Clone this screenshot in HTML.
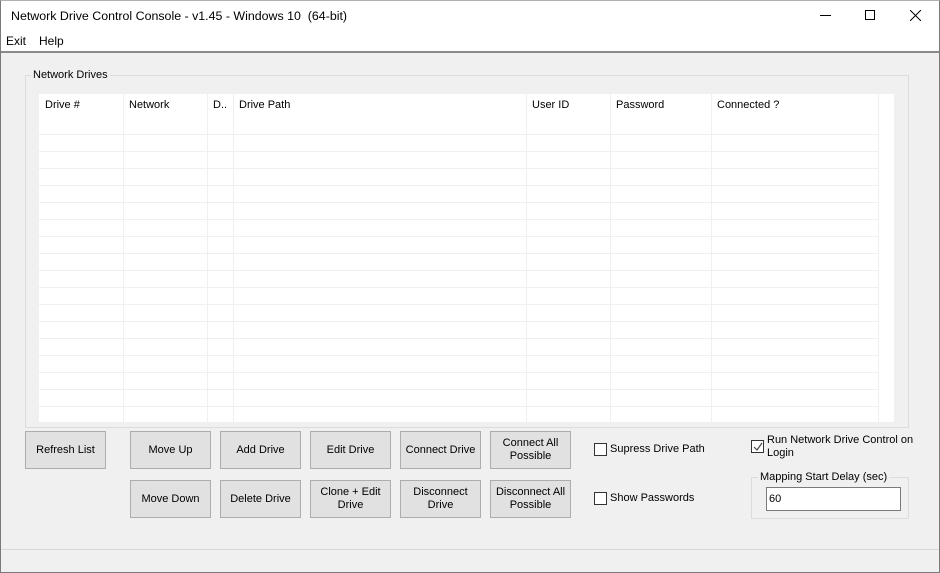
<!DOCTYPE html>
<html><head><meta charset="utf-8"><style>
*{box-sizing:border-box;margin:0;padding:0}
body{width:940px;height:573px;overflow:hidden;background:#f0f0f0;font-family:"Liberation Sans",sans-serif;font-size:11px;color:#000;position:relative}
.a{position:absolute}
.win{position:absolute;left:0;top:0;width:940px;height:573px;border:1px solid #7a7a7a;border-top:1px solid #b0b0b0}
.btn{position:absolute;width:81px;height:38px;background:#e1e1e1;border:1px solid #adadad;display:flex;align-items:center;justify-content:center;text-align:center;line-height:13px;font-size:11px}
.vl{position:absolute;top:94px;width:1px;height:328px;background:#f0f0f0}
.hl{position:absolute;left:39px;width:839px;height:1px;background:#f0f0f0}
.cb{position:absolute;width:13px;height:13px;border:1px solid #333;background:#fff}
</style></head><body>
<div class="a" style="left:0;top:0;width:940px;height:51px;background:#fff"></div>
<div class="a" style="left:11px;top:9px;font-size:12.4px">Network Drive Control Console - v1.45 - Windows 10&nbsp; (64-bit)</div>
<div class="a" style="left:820px;top:15px;width:11px;height:1px;background:#000"></div>
<div class="a" style="left:865px;top:10px;width:10px;height:10px;border:1px solid #000"></div>
<svg class="a" style="left:910px;top:10px" width="11" height="11"><path d="M0 0L11 11M11 0L0 11" stroke="#000" stroke-width="1"/></svg>
<div class="a" style="left:6px;top:34px;font-size:12px">Exit</div>
<div class="a" style="left:39px;top:34px;font-size:12px">Help</div>
<div class="a" style="left:0;top:51px;width:940px;height:2px;background:#8a8a8a"></div>

<div class="a" style="left:25px;top:75px;width:884px;height:353px;border:1px solid #dcdcdc"></div>
<div class="a" style="left:31px;top:69px;background:#f0f0f0;padding:0 2px">Network Drives</div>
<div class="a" style="left:39px;top:94px;width:855px;height:328px;background:#fff"></div>
<div class="a" style="left:878px;top:94px;width:16px;height:328px;background:#fff;border-left:1px solid #f0f0f0"></div>
<div class="vl" style="left:123px"></div><div class="vl" style="left:207px"></div><div class="vl" style="left:233px"></div><div class="vl" style="left:526px"></div><div class="vl" style="left:610px"></div><div class="vl" style="left:711px"></div>
<div class="hl" style="top:134px"></div><div class="hl" style="top:151px"></div><div class="hl" style="top:168px"></div><div class="hl" style="top:185px"></div><div class="hl" style="top:202px"></div><div class="hl" style="top:219px"></div><div class="hl" style="top:236px"></div><div class="hl" style="top:253px"></div><div class="hl" style="top:270px"></div><div class="hl" style="top:287px"></div><div class="hl" style="top:304px"></div><div class="hl" style="top:321px"></div><div class="hl" style="top:338px"></div><div class="hl" style="top:355px"></div><div class="hl" style="top:372px"></div><div class="hl" style="top:389px"></div><div class="hl" style="top:406px"></div>
<div class="a" style="left:45px;top:99px">Drive #</div>
<div class="a" style="left:129px;top:99px">Network</div>
<div class="a" style="left:213px;top:99px">D..</div>
<div class="a" style="left:239px;top:99px">Drive Path</div>
<div class="a" style="left:532px;top:99px">User ID</div>
<div class="a" style="left:616px;top:99px">Password</div>
<div class="a" style="left:717px;top:99px">Connected ?</div>

<div class="btn" style="left:25px;top:431px">Refresh List</div>
<div class="btn" style="left:130px;top:431px">Move Up</div>
<div class="btn" style="left:220px;top:431px">Add Drive</div>
<div class="btn" style="left:310px;top:431px">Edit Drive</div>
<div class="btn" style="left:400px;top:431px">Connect Drive</div>
<div class="btn" style="left:490px;top:431px">Connect All<br>Possible</div>
<div class="btn" style="left:130px;top:480px">Move Down</div>
<div class="btn" style="left:220px;top:480px">Delete Drive</div>
<div class="btn" style="left:310px;top:480px">Clone + Edit<br>Drive</div>
<div class="btn" style="left:400px;top:480px">Disconnect<br>Drive</div>
<div class="btn" style="left:490px;top:480px">Disconnect All<br>Possible</div>

<div class="cb" style="left:594px;top:443px"></div>
<div class="a" style="left:610px;top:443px">Supress Drive Path</div>
<div class="cb" style="left:594px;top:492px"></div>
<div class="a" style="left:610px;top:492px">Show Passwords</div>
<div class="cb" style="left:751px;top:440px"></div>
<svg class="a" style="left:753px;top:442px" width="10" height="10"><path d="M1 5L4 8L9 1" stroke="#444" stroke-width="1.2" fill="none"/></svg>
<div class="a" style="left:767px;top:434px;line-height:13px">Run Network Drive Control on<br>Login</div>
<div class="a" style="left:751px;top:477px;width:158px;height:42px;border:1px solid #dcdcdc"></div>
<div class="a" style="left:758px;top:471px;background:#f0f0f0;padding:0 2px">Mapping Start Delay (sec)</div>
<div class="a" style="left:766px;top:487px;width:135px;height:24px;background:#fff;border:1px solid #7a7a7a;padding:5px 2px">60</div>

<div class="a" style="left:0;top:549px;width:940px;height:1px;background:#d7d7d7"></div>
<div class="win"></div>
</body></html>
